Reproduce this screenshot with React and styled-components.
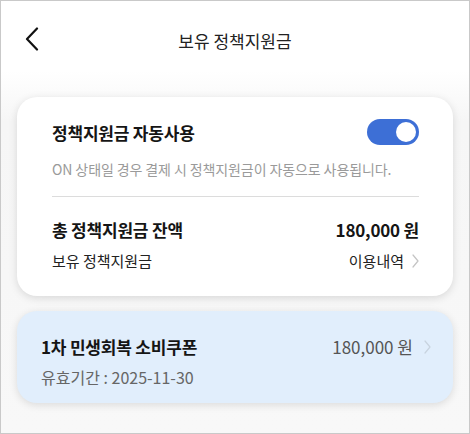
import React, { useState } from "react";
import styled, { createGlobalStyle } from "styled-components";

const GlobalStyle = createGlobalStyle`
  html, body {
    margin: 0;
    padding: 0;
  }
  body {
    font-family: "Noto Sans CJK KR", "Noto Sans", sans-serif;
    color: #111;
  }
`;

function Chevron({ size = 14, color = "#c4c4c4" }) {
  return (
    <svg width={size / 2} height={size} viewBox="0 0 7 14" fill="none">
      <path d="M1 1l5 6-5 6" stroke={color} strokeWidth="1.2" strokeLinecap="round" strokeLinejoin="round" />
    </svg>
  );
}

export default function App() {
  const [autoUse, setAutoUse] = useState(true);

  return (
    <Page>
      <GlobalStyle />
      <Header>
        <BackButton aria-label="뒤로">
          <svg width="14" height="24" viewBox="0 0 14 24" fill="none">
            <path d="M12 1.5L2 12l10 10.5" stroke="#111" strokeWidth="2.2" strokeLinecap="round" strokeLinejoin="round" />
          </svg>
        </BackButton>
        <Title>보유 정책지원금</Title>
      </Header>

      <Body>
        <Card>
          <Row>
            <Strong>정책지원금 자동사용</Strong>
            <Toggle $on={autoUse} onClick={() => setAutoUse(!autoUse)}>
              <Knob $on={autoUse} />
            </Toggle>
          </Row>
          <Desc>ON 상태일 경우 결제 시 정책지원금이 자동으로 사용됩니다.</Desc>
          <Divider />
          <Row>
            <Strong>총 정책지원금 잔액</Strong>
            <Strong>180,000 원</Strong>
          </Row>
          <SubRow>
            <Label>보유 정책지원금</Label>
            <LinkText>
              이용내역 <Chevron />
            </LinkText>
          </SubRow>
        </Card>

        <CouponCard>
          <CouponInfo>
            <Strong>1차 민생회복 소비쿠폰</Strong>
            <Expire>유효기간 : 2025-11-30</Expire>
          </CouponInfo>
          <Amount>
            180,000 원 <Chevron color="#c8d3df" />
          </Amount>
        </CouponCard>
      </Body>
    </Page>
  );
}

const Page = styled.div`
  width: 470px;
  height: 434px;
  box-sizing: border-box;
  border: 1px solid #c9c9c9;
  background: linear-gradient(#ffffff 0, #ffffff 70px, #f6f6f6 120px, #f8f8f8 100%);
  overflow: hidden;
`;

const Header = styled.header`
  position: relative;
  height: 78px;
  display: flex;
  align-items: center;
  justify-content: center;
`;

const BackButton = styled.button`
  position: absolute;
  left: 24px;
  top: 26px;
  padding: 0;
  border: 0;
  background: none;
  display: flex;
`;

const Title = styled.h1`
  margin: 0;
  font-size: 17px;
  font-weight: 400;
  color: #222;
`;

const Body = styled.div`
  padding: 18px 16px 0;
  display: flex;
  flex-direction: column;
  gap: 15px;
`;

const Card = styled.section`
  background: #fff;
  border-radius: 20px;
  box-shadow: 0 2px 8px rgba(0, 0, 0, 0.13);
  padding: 22px 34px 25px 35px;
`;

const Row = styled.div`
  display: flex;
  justify-content: space-between;
  align-items: center;
`;

const Strong = styled.span`
  font-size: 17px;
  font-weight: 700;
  color: #151515;
  letter-spacing: -0.2px;
`;

const Toggle = styled.button`
  width: 52px;
  height: 26px;
  border-radius: 13px;
  border: 0;
  padding: 0 3px;
  background: ${(p) => (p.$on ? "#3d6fd6" : "#cfcfcf")};
  display: flex;
  align-items: center;
  justify-content: ${(p) => (p.$on ? "flex-end" : "flex-start")};
  cursor: pointer;
`;

const Knob = styled.span`
  width: 20px;
  height: 20px;
  border-radius: 50%;
  background: #fff;
`;

const Desc = styled.p`
  margin: 14px 0 0;
  font-size: 14px;
  color: #9a9a9a;
  letter-spacing: -0.1px;
`;

const Divider = styled.hr`
  margin: 17px 0 20px;
  border: 0;
  border-top: 1px solid #dcdcdc;
`;

const SubRow = styled(Row)`
  margin-top: 8px;
`;

const Label = styled.span`
  font-size: 15px;
  color: #222;
`;

const LinkText = styled.span`
  display: flex;
  align-items: center;
  gap: 8px;
  font-size: 15px;
  color: #222;
`;

const CouponCard = styled.section`
  background: #e1eefc;
  border-radius: 20px;
  box-shadow: 0 2px 8px rgba(0, 0, 0, 0.12);
  padding: 23px 22px 14px 24px;
  display: flex;
  justify-content: space-between;
  align-items: flex-start;
`;

const CouponInfo = styled.div`
  display: flex;
  flex-direction: column;
  gap: 6px;
`;

const Expire = styled.span`
  font-size: 16px;
  color: #666;
`;

const Amount = styled.span`
  display: flex;
  align-items: center;
  gap: 11px;
  font-size: 17px;
  color: #555;
`;
